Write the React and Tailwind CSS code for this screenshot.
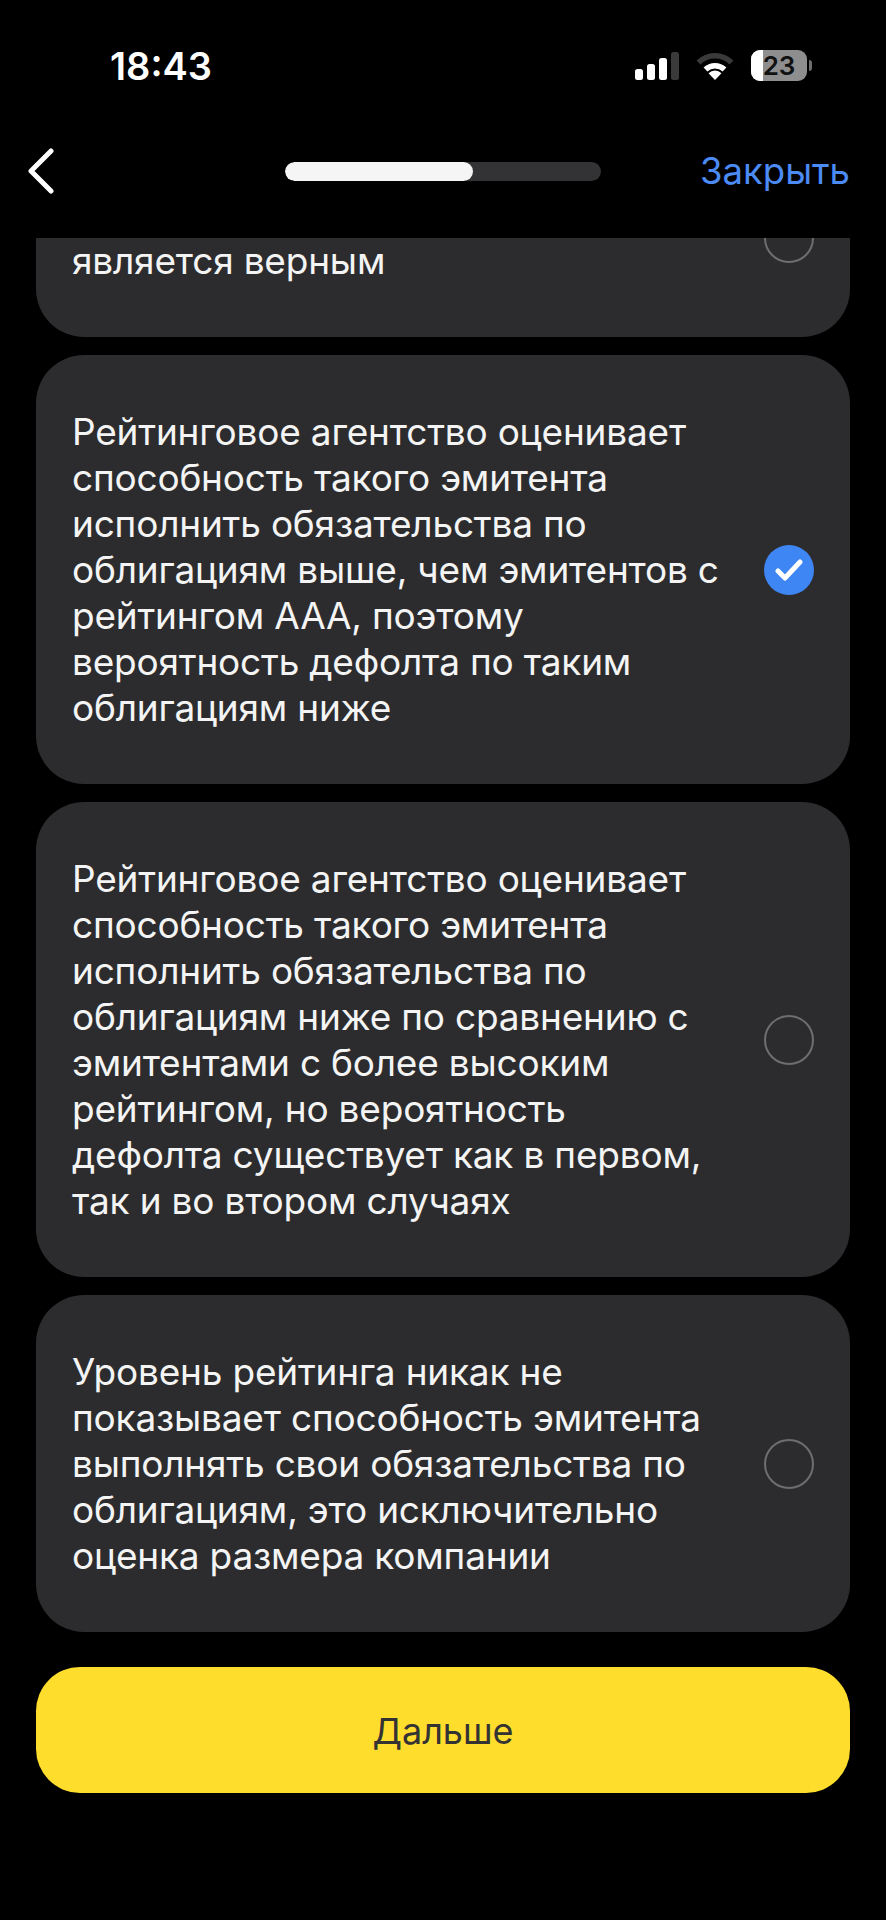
import React from "react";

const options = [
  {
    lines: [
      "Рейтинговое агентство оценивает",
      "способность такого эмитента",
      "исполнить обязательства по",
      "облигациям выше, чем эмитентов с",
      "рейтингом ААА, поэтому",
      "вероятность дефолта по таким",
      "облигациям ниже",
    ],
    checked: true,
  },
  {
    lines: [
      "Рейтинговое агентство оценивает",
      "способность такого эмитента",
      "исполнить обязательства по",
      "облигациям ниже по сравнению с",
      "эмитентами с более высоким",
      "рейтингом, но вероятность",
      "дефолта существует как в первом,",
      "так и во втором случаях",
    ],
  },
  {
    lines: [
      "Уровень рейтинга никак не",
      "показывает способность эмитента",
      "выполнять свои обязательства по",
      "облигациям, это исключительно",
      "оценка размера компании",
    ],
  },
];

function Radio({ checked }) {
  if (checked) {
    return (
      <div className="w-[50px] h-[50px] shrink-0 rounded-full bg-[#3f86f5] flex items-center justify-center">
        <svg width="28" height="24" viewBox="0 0 28 24" fill="none">
          <path d="M3 13l7 7L25 4" stroke="#fff" strokeWidth="5" strokeLinecap="round" strokeLinejoin="round" />
        </svg>
      </div>
    );
  }
  return <div className="w-[50px] h-[50px] shrink-0 rounded-full border-2 border-[#6e6e70]" />;
}

function OptionCard({ lines, checked }) {
  return (
    <div className="bg-[#2c2c2e] rounded-[48px] pl-[36px] pr-[36px] py-[53.5px] flex items-center justify-between">
      <div className="text-[37px] leading-[46px] text-[#f4f4f4] tracking-[-0.2px]">
        {lines.map((line, i) => (
          <div key={i} className="whitespace-nowrap">{line}</div>
        ))}
      </div>
      <Radio checked={checked} />
    </div>
  );
}

function SignalIcon() {
  return (
    <svg width="44" height="28" viewBox="0 0 44 28">
      <rect x="0" y="17" width="8" height="11" rx="2.5" fill="#fff" />
      <rect x="12" y="12" width="8" height="16" rx="2.5" fill="#fff" />
      <rect x="24" y="6" width="8" height="22" rx="2.5" fill="#fff" />
      <rect x="36" y="0" width="8" height="28" rx="2.5" fill="#3a3a3a" />
    </svg>
  );
}

function WifiIcon() {
  return (
    <svg width="38" height="28" viewBox="0 0 38 28" fill="none">
      <path d="M2.5 10.5a23.5 23.5 0 0 1 33 0" stroke="#3a3a3a" strokeWidth="5.5" strokeLinecap="butt" />
      <path d="M9.5 17.5a13.6 13.6 0 0 1 19 0" stroke="#fff" strokeWidth="5.5" strokeLinecap="butt" />
      <path d="M19 28l-6.5-6.8a9.4 9.4 0 0 1 13 0z" fill="#fff" />
    </svg>
  );
}

export default function App() {
  return (
    <div className="w-[886px] h-[1920px] bg-black overflow-hidden flex flex-col" style={{ fontFamily: "Inter, 'Liberation Sans', sans-serif" }}>
      {/* status bar */}
      <div className="h-[130px] pt-[46px] pl-[110px] pr-[74px] flex justify-between items-start">
        <div className="text-[38px] leading-[40px] font-semibold text-white">18:43</div>
        <div className="flex items-center pt-[4px]">
          <SignalIcon />
          <div className="ml-[17px]"><WifiIcon /></div>
          <div className="relative ml-[17px] w-[56px] h-[31px] rounded-[9px] bg-[#8e8e8e] overflow-hidden">
            <div className="w-[12px] h-full bg-white" />
            <div className="absolute inset-0 flex items-center justify-center text-[26px] font-semibold text-[#111]">23</div>
          </div>
          <div className="ml-[2px] w-[3px] h-[11px] rounded-r-full bg-[#6e6e6e]" />
        </div>
      </div>

      {/* top nav */}
      <div className="h-[108px] pl-[27px] pr-[36px] pb-[26px] flex items-center">
        <svg width="28" height="46" viewBox="0 0 28 46" fill="none">
          <path d="M24 3L4 23l20 20" stroke="#fff" strokeWidth="5" strokeLinecap="round" strokeLinejoin="round" />
        </svg>
        <div className="ml-[230px] w-[316px] h-[19px] rounded-full bg-[#333335] overflow-hidden">
          <div className="w-[188px] h-full rounded-full bg-[#f5f5f5]" />
        </div>
        <div className="ml-auto text-[36.5px] leading-[46px] text-[#4c8bf5]">Закрыть</div>
      </div>

      {/* scrolled list */}
      <div className="h-[1412px] overflow-hidden px-[36px]">
        <div className="-mt-[100px] flex flex-col gap-[18px]">
          <OptionCard lines={["\u00a0", "является верным"]} />
          {options.map((o, i) => (
            <OptionCard key={i} lines={o.lines} checked={o.checked} />
          ))}
        </div>
      </div>

      {/* next button */}
      <div className="px-[36px] mt-[17px]">
        <div className="h-[126px] pt-[2px] rounded-[44px] bg-[#ffdd2d] flex items-center justify-center text-[36px] text-[#333]">
          Дальше
        </div>
      </div>
    </div>
  );
}
